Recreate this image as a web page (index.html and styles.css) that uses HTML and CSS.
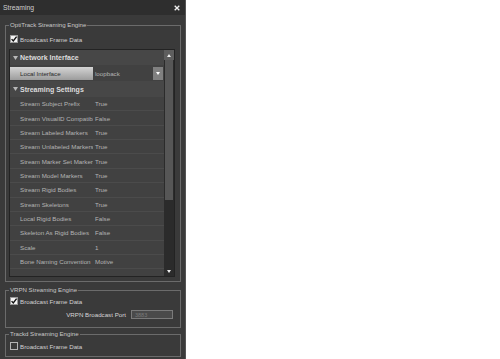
FILE: index.html
```html
<!DOCTYPE html>
<html>
<head>
    <title>Streaming</title>
    <link rel="stylesheet" href="styles.css">
</head>
<body>
    <div class="panel">
        <div class="titlebar">
            <span class="title">Streaming</span>
            <svg class="close" width="6" height="6" viewBox="0 0 6 6"><path d="M0.7 0.7 L5.3 5.3 M5.3 0.7 L0.7 5.3" stroke="#f0f0f0" stroke-width="1.3"/></svg>
        </div>

        <div class="panel-body">
            <fieldset class="group group-optitrack">
                <legend>OptiTrack Streaming Engine</legend>
                <div class="check-row">
                    <svg class="check" width="8" height="8" viewBox="0 0 8 8"><rect x="0.5" y="0.5" width="7" height="7" fill="#f4f4f4" stroke="#9a9a9a"/><path d="M1.6 4.1 L3.3 6 L6.6 1.6" fill="none" stroke="#111" stroke-width="1.4"/></svg>
                    <span>Broadcast Frame Data</span>
                </div>

                <div class="grid">
                    <div class="grid-rows">
                        <div class="grid-header">
                            <svg class="arrow" width="5" height="4" viewBox="0 0 5 4"><path d="M0 0 L5 0 L2.5 4 Z" fill="#b8b8b8"/></svg>
                            <span>Network Interface</span>
                        </div>
                        <div class="local-row">
                            <div class="local-btn">Local Interface</div>
                            <div class="grid-value">loopback</div>
                            <div class="dropdown"><svg width="4" height="3" viewBox="0 0 4 3"><path d="M0 0 L4 0 L2 3 Z" fill="#fff"/></svg></div>
                        </div>
                        <div class="grid-header header-tall">
                            <svg class="arrow" width="5" height="4" viewBox="0 0 5 4"><path d="M0 0 L5 0 L2.5 4 Z" fill="#b8b8b8"/></svg>
                            <span>Streaming Settings</span>
                        </div>
                        <div class="grid-row"><div class="grid-label">Stream Subject Prefix</div><div class="grid-value">True</div></div>
                        <div class="grid-row"><div class="grid-label">Stream VisualID Compatibility</div><div class="grid-value">False</div></div>
                        <div class="grid-row"><div class="grid-label">Stream Labeled Markers</div><div class="grid-value">True</div></div>
                        <div class="grid-row"><div class="grid-label">Stream Unlabeled Markers</div><div class="grid-value">True</div></div>
                        <div class="grid-row"><div class="grid-label">Stream Marker Set Markers</div><div class="grid-value">True</div></div>
                        <div class="grid-row"><div class="grid-label">Stream Model Markers</div><div class="grid-value">True</div></div>
                        <div class="grid-row"><div class="grid-label">Stream Rigid Bodies</div><div class="grid-value">True</div></div>
                        <div class="grid-row"><div class="grid-label">Stream Skeletons</div><div class="grid-value">True</div></div>
                        <div class="grid-row"><div class="grid-label">Local Rigid Bodies</div><div class="grid-value">False</div></div>
                        <div class="grid-row"><div class="grid-label">Skeleton As Rigid Bodies</div><div class="grid-value">False</div></div>
                        <div class="grid-row"><div class="grid-label">Scale</div><div class="grid-value">1</div></div>
                        <div class="grid-row"><div class="grid-label">Bone Naming Convention</div><div class="grid-value">Motive</div></div>
                    </div>

                    <div class="scrollbar">
                        <div class="scroll-btn"><svg width="4" height="3" viewBox="0 0 4 3"><path d="M0 3 L4 3 L2 0 Z" fill="#eee"/></svg></div>
                        <div class="scroll-track"><div class="scroll-thumb"></div></div>
                        <div class="scroll-btn scroll-btn-down"><svg width="4" height="3" viewBox="0 0 4 3"><path d="M0 0 L4 0 L2 3 Z" fill="#eee"/></svg></div>
                    </div>
                </div>
            </fieldset>

            <fieldset class="group group-vrpn">
                <legend>VRPN Streaming Engine</legend>
                <div class="check-row">
                    <svg class="check" width="8" height="8" viewBox="0 0 8 8"><rect x="0.5" y="0.5" width="7" height="7" fill="#f4f4f4" stroke="#9a9a9a"/><path d="M1.6 4.1 L3.3 6 L6.6 1.6" fill="none" stroke="#111" stroke-width="1.4"/></svg>
                    <span>Broadcast Frame Data</span>
                </div>
                <div class="port-row">
                    <span>VRPN Broadcast Port</span>
                    <div class="port-input">3883</div>
                </div>
            </fieldset>

            <fieldset class="group group-trackd">
                <legend>Trackd Streaming Engine</legend>
                <div class="check-row">
                    <svg class="check" width="8" height="8" viewBox="0 0 8 8"><rect x="0.5" y="0.5" width="7" height="7" fill="#3a3a3a" stroke="#b4b4b4"/></svg>
                    <span>Broadcast Frame Data</span>
                </div>
            </fieldset>
        </div>
    </div>
</body>
</html>
```

FILE: styles.css
```css
body {
    margin: 0;
    background-color: #fff;
    font-family: "Liberation Sans", Arial, sans-serif;
}

.panel {
    width: 185px;
    height: 359px;
    background-color: #3a3a3a;
    border-right: 1px solid #555;
    display: flex;
    flex-direction: column;
}

.titlebar {
    height: 15px;
    background-color: #2e2e2e;
    display: flex;
    align-items: center;
    justify-content: space-between;
    padding: 0 5px 0 3px;
    box-sizing: border-box;
}

.title {
    font-size: 6.8px;
    color: #cfcfcf;
}

.panel-body {
    padding: 6px 4px 0 5px;
}

.group {
    margin: 0;
    padding: 0 5px 4px 3px;
    border: 1px solid #6b6b6b;
    min-width: 0;
}

.group legend {
    padding: 0 1px;
    font-size: 6.1px;
    line-height: 8px;
    color: #c8c8c8;
}

.group-vrpn {
    margin-top: 4px;
    padding-bottom: 8px;
}

.group-trackd {
    margin-top: 2px;
    padding-bottom: 5px;
}

.check-row {
    display: flex;
    align-items: center;
    gap: 2px;
    height: 10px;
    margin-top: 5px;
    margin-left: 1px;
    font-size: 6.2px;
    color: #d2d2d2;
}

.group-vrpn .check-row {
    margin-top: 2px;
}

.group-trackd .check-row {
    margin-top: 3px;
}

/* property grid */
.grid {
    margin-top: 5px;
    height: 228px;
    border: 1px solid #232323;
    background-color: #414141;
    box-sizing: border-box;
    display: flex;
}

.grid-rows {
    flex: 1;
    overflow: hidden;
}

.grid-header {
    height: 15px;
    display: flex;
    align-items: center;
    padding-left: 3px;
    background-color: #474747;
    font-size: 7px;
    font-weight: bold;
    color: #dcdcdc;
}

.grid-header .arrow {
    margin-right: 2px;
}

.header-tall {
    height: 16px;
}

.local-row {
    height: 16px;
    display: flex;
    align-items: center;
}

.local-btn {
    width: 83px;
    height: 13px;
    box-sizing: border-box;
    padding-left: 10px;
    display: flex;
    align-items: center;
    background: linear-gradient(#d4d4d4, #9c9c9c);
    font-size: 6.2px;
    color: #2a2a2a;
}

.dropdown {
    width: 10px;
    height: 13px;
    margin-right: 1px;
    background-color: #808080;
    display: flex;
    align-items: center;
    justify-content: center;
}

.grid-row {
    height: 14.36px;
    box-sizing: border-box;
    border-bottom: 1px solid #4b4b4b;
    display: flex;
    align-items: center;
    font-size: 6.2px;
    color: #b4b4b4;
}

.grid-label {
    width: 83px;
    flex-shrink: 0;
    padding-left: 10px;
    box-sizing: border-box;
    white-space: nowrap;
    overflow: hidden;
}

.grid-value {
    flex: 1;
    padding-left: 2px;
    font-size: 6.2px;
    color: #b4b4b4;
}

.scrollbar {
    width: 10px;
    display: flex;
    flex-direction: column;
    background-color: #2b2b2b;
}

.scroll-btn {
    height: 10px;
    background-color: #5e5e5e;
    display: flex;
    align-items: center;
    justify-content: center;
}

.scroll-btn-down {
    background-color: #2b2b2b;
}

.scroll-track {
    flex: 1;
}

.scroll-thumb {
    height: 140px;
    margin: 0 1px;
    background-color: #565656;
}

/* vrpn port */
.port-row {
    display: flex;
    justify-content: flex-end;
    align-items: center;
    gap: 5px;
    margin-top: 4px;
    margin-right: 2px;
    font-size: 6.2px;
    color: #d6d6d6;
}

.port-input {
    width: 42px;
    height: 9px;
    box-sizing: border-box;
    padding-left: 3px;
    border: 1px solid #7a7a7a;
    background-color: #4a4a4a;
    display: flex;
    align-items: center;
    font-size: 5.5px;
    color: #7a7a7a;
}
```
